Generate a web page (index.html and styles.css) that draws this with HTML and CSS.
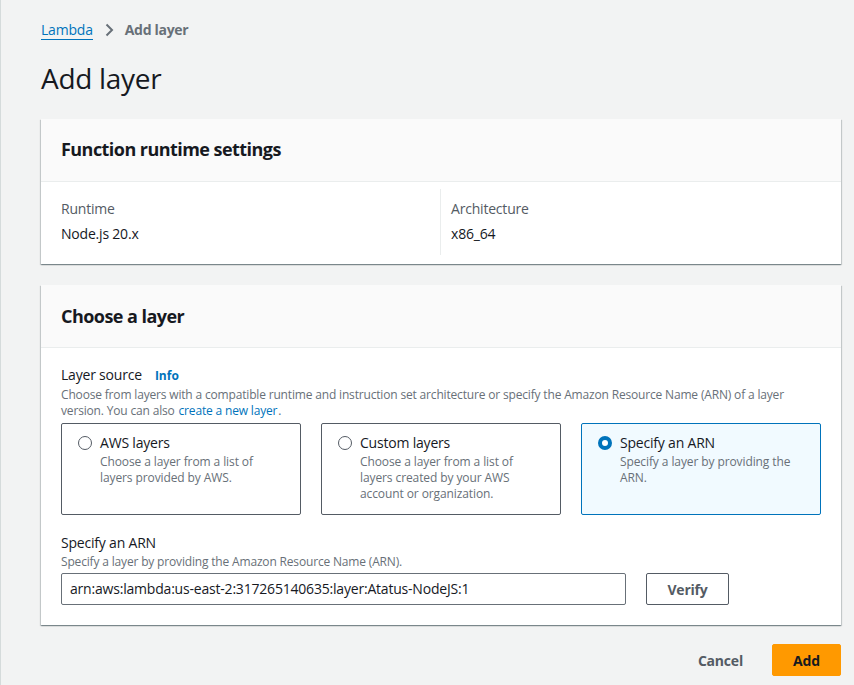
FILE: index.html
```html
<!DOCTYPE html>
<html>
<head>
<meta charset="utf-8">
<link rel="stylesheet" href="styles.css">
</head>
<body>
<div class="page">
  <nav class="breadcrumbs">
    <a class="crumb-link" href="#">Lambda</a>
    <svg class="crumb-sep" width="16" height="16" viewBox="0 0 16 16"><path d="M5.5 2.5 11 8l-5.5 5.5" fill="none" stroke="#687078" stroke-width="2"/></svg>
    <span class="crumb-current">Add layer</span>
  </nav>
  <h1 class="title">Add layer</h1>

  <section class="card">
    <div class="card-header"><h2>Function runtime settings</h2></div>
    <div class="card-body kv">
      <div class="kv-col kv-col-first">
        <div class="kv-label">Runtime</div>
        <div class="kv-value">Node.js 20.x</div>
      </div>
      <div class="kv-col kv-col-divided">
        <div class="kv-label">Architecture</div>
        <div class="kv-value">x86_64</div>
      </div>
    </div>
  </section>

  <section class="card card-second">
    <div class="card-header"><h2>Choose a layer</h2></div>
    <div class="card-body form">
      <div class="field">
        <div class="field-label">Layer source<a class="info" href="#">Info</a></div>
        <div class="field-desc">Choose from layers with a compatible runtime and instruction set architecture or specify the Amazon Resource Name (ARN) of a layer version. You can also <a class="link" href="#">create a new layer</a>.</div>
        <div class="tiles">
          <div class="tile">
            <span class="radio"></span>
            <div class="tile-text">
              <div class="tile-label">AWS layers</div>
              <div class="tile-desc">Choose a layer from a list of layers provided by AWS.</div>
            </div>
          </div>
          <div class="tile">
            <span class="radio"></span>
            <div class="tile-text">
              <div class="tile-label">Custom layers</div>
              <div class="tile-desc">Choose a layer from a list of layers created by your AWS account or organization.</div>
            </div>
          </div>
          <div class="tile tile-selected">
            <span class="radio radio-on"></span>
            <div class="tile-text">
              <div class="tile-label">Specify an ARN</div>
              <div class="tile-desc">Specify a layer by providing the ARN.</div>
            </div>
          </div>
        </div>
      </div>
      <div class="field field-arn">
        <div class="field-label">Specify an ARN</div>
        <div class="field-desc">Specify a layer by providing the Amazon Resource Name (ARN).</div>
        <div class="arn-row">
          <div class="input">arn:aws:lambda:us-east-2:317265140635:layer:Atatus-NodeJS:1</div>
          <button class="btn btn-normal">Verify</button>
        </div>
      </div>
    </div>
  </section>

  <div class="actions">
    <button class="btn-link">Cancel</button>
    <button class="btn btn-primary">Add</button>
  </div>
</div>
</body>
</html>
```

FILE: styles.css
```css
* { box-sizing: border-box; }
html, body { margin: 0; padding: 0; }
body {
  background: #f2f3f3;
  font-family: "Open Sans", "Noto Sans", sans-serif;
  color: #16191f;
  width: 854px;
  height: 685px;
  overflow: hidden;
  border-left: 1px solid #d5dbdb;
  letter-spacing: -0.2px;
}
.page {
  padding: 20px 13px 0 40px;
}
.breadcrumbs {
  display: flex;
  align-items: center;
  height: 20px;
  font-size: 14px;
  line-height: 20px;
}
.crumb-link {
  color: #0073bb;
  text-decoration: none;
  border-bottom: 1px solid #0073bb;
  line-height: 18px;
}
.crumb-sep { margin: 0 8px 0 8px; }
.crumb-current { color: #687078; font-weight: 700; letter-spacing: -0.3px; }
.title {
  margin: 20px 0 0;
  font-size: 28px;
  line-height: 36px;
  font-weight: 400;
  height: 59px;
  letter-spacing: -0.3px;
}
.card {
  background: #fff;
  width: 800px;
  box-shadow: 0 1px 1px 0 rgba(0,28,36,.3), 1px 1px 1px 0 rgba(0,28,36,.15), -1px 1px 1px 0 rgba(0,28,36,.15);
}
.card-second { margin-top: 21px; }
.card-header {
  background: #fafafa;
  border-bottom: 1px solid #eaeded;
  height: 63px;
  padding: 0 20px 3px;
  display: flex;
  align-items: center;
}
.card-second .card-header { padding-bottom: 1px; }
.card-header h2 {
  margin: 0;
  font-size: 18px;
  font-weight: 700;
  line-height: 22px;
  letter-spacing: -0.55px;
}
.kv {
  display: flex;
  padding: 7px 20px 9px;
}
.kv-col {
  padding: 10px 0 10px;
  height: 66px;
}
.kv-col-first { width: 379px; flex: none; }
.kv-col-divided {
  flex: 1;
  border-left: 1px solid #eaeded;
  padding-left: 10px;
}
.kv-label { font-size: 14px; line-height: 20px; color: #545b64; }
.kv-value { font-size: 14px; line-height: 20px; margin-top: 5px; }
.form { padding: 17px 20px 20px; }
.field-label { font-size: 14px; line-height: 20px; }
.info {
  color: #0073bb;
  font-weight: 700;
  font-size: 12px;
  text-decoration: none;
  margin-left: 13px;
  letter-spacing: 0;
}
.field-desc {
  font-size: 12px;
  line-height: 16px;
  color: #687078;
  margin-top: 1px;
  letter-spacing: -0.17px;
}
.link { color: #0073bb; text-decoration: none; margin: 0 1px; }
.tiles {
  display: grid;
  grid-template-columns: repeat(3, 240px);
  gap: 20px;
  margin-top: 4px;
}
.tile {
  border: 1px solid #545b64;
  border-radius: 2px;
  height: 92px;
  padding: 9px 16px;
  display: flex;
  gap: 8px;
}
.tile-selected {
  border-color: #0073bb;
  background: #f1faff;
}
.radio {
  flex: none;
  width: 14px;
  height: 14px;
  border: 1px solid #545b64;
  border-radius: 50%;
  margin-top: 3px;
  background: #fff;
}
.radio-on {
  border: 4px solid #0073bb;
}
.tile-label { font-size: 14px; line-height: 20px; }
.tile-desc { font-size: 12px; line-height: 16px; color: #687078; margin-top: 1px; letter-spacing: -0.1px; }
.field-arn { margin-top: 18px; }
.arn-row {
  display: flex;
  gap: 20px;
  margin-top: 3px;
}
.input {
  width: 565px;
  height: 32px;
  border: 1px solid #687078;
  border-radius: 2px;
  padding: 0 8px;
  font-size: 14px;
  line-height: 30px;
}
.btn {
  font-family: inherit;
  font-weight: 700;
  font-size: 14px;
  border-radius: 2px;
  height: 32px;
  cursor: pointer;
  letter-spacing: -0.2px;
}
.btn-normal {
  background: #fff;
  border: 1px solid #545b64;
  color: #545b64;
  width: 83px;
}
.actions {
  display: flex;
  justify-content: flex-end;
  align-items: center;
  width: 800px;
  margin-top: 19px;
  gap: 10px;
}
.btn-link {
  background: none;
  border: none;
  font-family: inherit;
  font-weight: 700;
  font-size: 14px;
  color: #545b64;
  padding: 0 19px;
  height: 32px;
  letter-spacing: -0.2px;
}
.btn-primary {
  background: #ff9900;
  border: 1px solid #ff9900;
  color: #16191f;
  width: 69px;
}
```
